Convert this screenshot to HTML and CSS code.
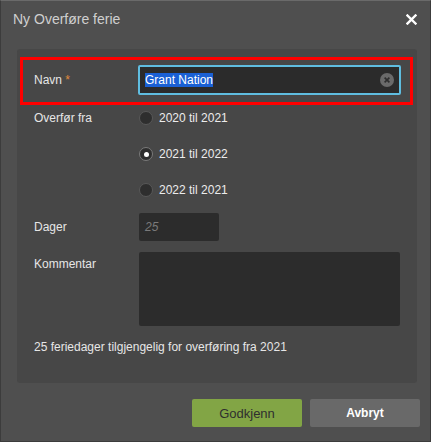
FILE: index.html
```html
<!DOCTYPE html>
<html lang="no">
<head>
<meta charset="utf-8">
<title>Ny Overføre ferie</title>
<link rel="stylesheet" href="styles.css">
</head>
<body>
<div class="dialog">
  <div class="header">
    <span class="title">Ny Overføre ferie</span>
    <span class="close" aria-label="Lukk">
      <svg width="11" height="11" viewBox="0 0 11 11"><path d="M1.5 1.5 L9.5 9.5 M9.5 1.5 L1.5 9.5" stroke="#fff" stroke-width="2.4" stroke-linecap="square"/></svg>
    </span>
  </div>
  <div class="panel">
    <div class="row highlight">
      <div class="label">Navn <span class="req">*</span></div>
      <div class="textinput">
        <span class="sel">Grant Nation</span>
        <span class="clear">
          <svg width="14" height="14" viewBox="0 0 14 14"><circle cx="7" cy="7" r="7" fill="#6a6a6a"/><path d="M4.6 4.6 L9.4 9.4 M9.4 4.6 L4.6 9.4" stroke="#2e2e2e" stroke-width="1.6"/></svg>
        </span>
      </div>
    </div>
    <div class="row radios-row">
      <div class="label">Overfør fra</div>
      <div class="radios">
        <div class="radio"><span class="dot"></span>2020 til 2021</div>
        <div class="radio"><span class="dot checked"></span>2021 til 2022</div>
        <div class="radio"><span class="dot"></span>2022 til 2021</div>
      </div>
    </div>
    <div class="row days-row">
      <div class="label">Dager</div>
      <div class="days">25</div>
    </div>
    <div class="row comment-row">
      <div class="label top">Kommentar</div>
      <div class="textarea"></div>
    </div>
    <div class="info">25 feriedager tilgjengelig for overføring fra 2021</div>
  </div>
  <div class="footer">
    <button class="btn ok">Godkjenn</button>
    <button class="btn cancel">Avbryt</button>
  </div>
</div>
</body>
</html>
```

FILE: styles.css
```css
html, body {
  margin: 0;
  padding: 0;
  background: #ffffff;
}

body {
  font-family: "Liberation Sans", Arial, sans-serif;
  font-size: 12px;
  color: #e6e6e6;
}

.dialog {
  width: 431px;
  height: 442px;
  box-sizing: border-box;
  background: #4f4f4f;
  border: 1px solid #3c3c3c;
  border-top-color: #6a6a6a;
  display: flex;
  flex-direction: column;
}

.header {
  height: 48px;
  display: flex;
  align-items: flex-start;
  justify-content: space-between;
  padding: 0 12px 0 12px;
  box-sizing: border-box;
}

.title {
  font-size: 14px;
  line-height: 16px;
  margin-top: 10px;
  color: #cfcfcf;
}

.close {
  margin-top: 13px;
  margin-right: 1px;
  display: flex;
}

.panel {
  margin: 0 13px 0 16px;
  background: #474747;
  border-radius: 3px;
  padding: 8px 17px 28px 17px;
  display: flex;
  flex-direction: column;
}

.row {
  display: flex;
  align-items: center;
}

.label {
  width: 105px;
  flex: none;
  line-height: 16px;
  color: #e6e6e6;
}

.label.top {
  align-self: flex-start;
  padding-top: 4px;
}

.req {
  color: #e08a3c;
}

.highlight {
  margin: 0 -13px 0 -14px;
  border: 3px solid #ff0000;
  padding: 5px 9px 7px 11px;
}

.highlight .label {
  width: 104px;
}

.textinput {
  flex: 1;
  height: 30px;
  box-sizing: border-box;
  background: #2b2b2b;
  border: 2px solid #5fbde0;
  border-radius: 2px;
  display: flex;
  align-items: center;
  justify-content: space-between;
  padding: 0 5px 0 5px;
}

.sel {
  background: #1a60d4;
  color: #ffffff;
  line-height: 14px;
}

.clear {
  display: flex;
}

.radios-row {
  align-items: flex-start;
  margin-top: 5px;
}

.radios {
  display: flex;
  flex-direction: column;
  gap: 20px;
}

.radio {
  display: flex;
  align-items: center;
  gap: 6px;
  line-height: 16px;
  color: #ececec;
}

.dot {
  width: 14px;
  height: 14px;
  box-sizing: border-box;
  border-radius: 50%;
  background: #2e2e2e;
  border: 1px solid #585858;
  display: flex;
  align-items: center;
  justify-content: center;
}

.dot.checked {
  border-color: #7a7a7a;
}

.dot.checked::after {
  content: "";
  width: 5px;
  height: 5px;
  border-radius: 50%;
  background: #ffffff;
}

.days-row {
  margin-top: 15px;
}

.days {
  width: 80px;
  height: 28px;
  box-sizing: border-box;
  background: #2c2c2c;
  border-radius: 2px;
  padding-left: 6px;
  line-height: 28px;
  font-style: italic;
  color: #7a7a7a;
}

.comment-row {
  margin-top: 11px;
}

.textarea {
  width: 261px;
  height: 74px;
  background: #2c2c2c;
  border-radius: 2px;
}

.info {
  margin-top: 13px;
  line-height: 16px;
  color: #e6e6e6;
}

.footer {
  display: flex;
  justify-content: flex-end;
  gap: 8px;
  padding: 16px 10px 0 0;
}

.btn {
  width: 110px;
  height: 28px;
  border: none;
  border-radius: 2px;
  font-family: "Liberation Sans", Arial, sans-serif;
  padding: 0;
}

.ok {
  background: #82a545;
  color: #2f2f2f;
  font-size: 13px;
}

.cancel {
  background: #696969;
  color: #ffffff;
  font-size: 12px;
  font-weight: bold;
}
```
